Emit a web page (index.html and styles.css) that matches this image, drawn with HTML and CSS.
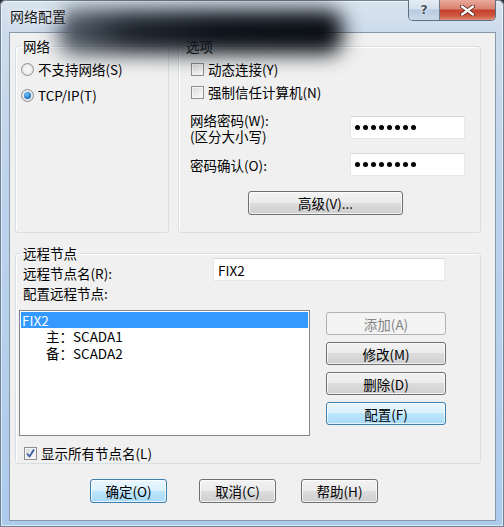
FILE: index.html
```html
<!DOCTYPE html>
<html lang="zh-CN">
<head>
<meta charset="utf-8">
<title>网络配置</title>
<link rel="stylesheet" href="styles.css">
</head>
<body>
<div class="window">
  <div class="titlebar">
    <div class="smudge"></div>
    <span class="title">网络配置</span>
    <div class="caption-btns">
      <div class="cbtn help">?</div>
      <div class="cbtn close">
        <svg width="17" height="11" viewBox="0 0 17 11"><path d="M3 1.5 L14 9.5 M14 1.5 L3 9.5" stroke="#5a2a22" stroke-width="4" stroke-linecap="round"/><path d="M3 1.5 L14 9.5 M14 1.5 L3 9.5" stroke="#ffffff" stroke-width="2.2" stroke-linecap="round"/></svg>
      </div>
    </div>
  </div>
  <div class="client">
    <div class="top-row">
      <fieldset class="group g-net">
        <legend>网络</legend>
        <div class="net-body">
          <div class="opt"><span class="radio"></span><span>不支持网络(S)</span></div>
          <div class="opt"><span class="radio on"></span><span>TCP/IP(T)</span></div>
        </div>
      </fieldset>
      <fieldset class="group g-opt">
        <legend>选项</legend>
        <div class="opt-body">
          <div class="opt"><span class="check"></span><span>动态连接(Y)</span></div>
          <div class="opt opt2"><span class="check"></span><span>强制信任计算机(N)</span></div>
          <div class="pw-row pw-row1">
            <div class="pw-label"><div class="ln">网络密码(W):</div><div class="ln">(区分大小写)</div></div>
            <div class="pw"><i></i><i></i><i></i><i></i><i></i><i></i><i></i><i></i></div>
          </div>
          <div class="pw-row pw-row2">
            <div class="pw-label">密码确认(O):</div>
            <div class="pw"><i></i><i></i><i></i><i></i><i></i><i></i><i></i><i></i></div>
          </div>
          <div class="btn btn-adv">高级(V)...</div>
        </div>
      </fieldset>
    </div>
    <fieldset class="group g-remote">
      <legend>远程节点</legend>
      <div class="remote-body">
        <div class="name-row">
          <span class="lbl">远程节点名(R):</span>
          <div class="textbox">FIX2</div>
        </div>
        <div class="lbl cfg-lbl">配置远程节点:</div>
        <div class="list-row">
          <div class="listbox">
            <div class="item sel">FIX2</div>
            <div class="item sub">主：SCADA1</div>
            <div class="item sub">备：SCADA2</div>
          </div>
          <div class="side-btns">
            <div class="btn disabled">添加(A)</div>
            <div class="btn">修改(M)</div>
            <div class="btn">删除(D)</div>
            <div class="btn default">配置(F)</div>
          </div>
        </div>
        <div class="opt show-all"><span class="check on"><svg width="11" height="11" viewBox="0 0 11 11"><path d="M2 5.5 L4.5 8.5 L9 1.5" fill="none" stroke="#3c5ea6" stroke-width="1.8" stroke-linejoin="round"/></svg></span><span>显示所有节点名(L)</span></div>
      </div>
    </fieldset>
    <div class="footer">
      <div class="btn default b-ok">确定(O)</div>
      <div class="btn b-cancel">取消(C)</div>
      <div class="btn b-help">帮助(H)</div>
    </div>
  </div>
</div>
</body>
</html>
```

FILE: styles.css
```css
* { box-sizing: border-box; }
html, body { margin: 0; padding: 0; background: #2b3038; }
body {
  font-family: "Noto Sans CJK SC", "Noto Sans", sans-serif;
  font-size: 13.5px;
  line-height: 16px;
  color: #000;
}
.window {
  width: 504px;
  height: 527px;
  border-radius: 6px 6px 0 0;
  background: linear-gradient(to bottom, #dae4ef 0px, #cddbeb 32px, #bcd3ec 200px, #aecbec 527px);
  box-shadow: inset 0 0 0 1px #6f8296, inset 0 0 0 2px rgba(255,255,255,0.55);
  display: flex;
  flex-direction: column;
  overflow: hidden;
}
.titlebar {
  position: relative;
  height: 32px;
  display: flex;
  align-items: flex-start;
  padding: 0 8px 0 10px;
}
.smudge {
  position: absolute;
  left: 58px;
  top: 10px;
  width: 285px;
  height: 44px;
  background: linear-gradient(to right, #5a6470 0%, #1e252e 25%, #0c1219 55%, #090d12 100%);
  filter: blur(10px);
  border-radius: 16px;
}
.title {
  position: relative;
  margin-top: 8px;
  font-size: 14px;
  line-height: 17px;
  color: #1a1a1a;
  text-shadow: 0 0 6px rgba(255,255,255,0.8);
}
.caption-btns {
  position: relative;
  margin-left: auto;
  display: flex;
  height: 21px;
  border: 1px solid #5f6f82;
  border-top: none;
  border-radius: 0 0 5px 5px;
  overflow: hidden;
}
.cbtn {
  height: 20px;
  display: flex;
  align-items: center;
  justify-content: center;
}
.help {
  width: 31px;
  border-right: 1px solid #6d7b8c;
  background: linear-gradient(to bottom, #e4ecf5 0%, #d3dfec 45%, #b9cbe0 50%, #c9d9ea 100%);
  font-family: "DejaVu Sans", sans-serif;
  font-weight: bold;
  font-size: 13px;
  color: #4a5462;
  text-shadow: 0 0 2px #fff, 0 0 2px #fff;
}
.close {
  width: 55px;
  background: linear-gradient(to bottom, #e9a99b 0%, #d8826f 45%, #c4402e 50%, #d0583f 80%, #e0907a 100%);
}
.client {
  margin: 0 8px 0 9px;
  height: 489px;
  border: 1px solid #8a97a6;
  background: #f0f0f0;
  padding: 5px 0 0 5px;
}
.top-row {
  display: flex;
  gap: 9px;
}
.group {
  margin: 0;
  padding: 0;
  border: 1px solid #d5dfe5;
  border-radius: 3px;
  box-shadow: inset 1px 1px 0 #fff;
  min-width: 0;
}
.group legend {
  margin-left: 5px;
  padding: 0 2px;
  line-height: 16px;
}
.g-net { width: 154px; height: 195px; }
.g-opt { width: 303px; height: 195px; }
.g-remote { width: 466px; height: 219px; margin-top: 12px; }

.opt {
  display: flex;
  align-items: center;
  gap: 4px;
  height: 18px;
}
.net-body {
  padding: 6px 0 0 5px;
  display: flex;
  flex-direction: column;
  gap: 8px;
}
.radio {
  width: 13px;
  height: 13px;
  border-radius: 50%;
  border: 1px solid #8d9196;
  background: radial-gradient(circle at 50% 50%, #f4f4f4 0 3px, #dcdcdc 6px);
  display: flex;
  align-items: center;
  justify-content: center;
}
.radio.on::after {
  content: "";
  width: 7px;
  height: 7px;
  border-radius: 50%;
  background: radial-gradient(circle at 40% 35%, #7cc4f8 0, #2a7fd0 55%, #0f4f92 100%);
}
.check {
  width: 13px;
  height: 13px;
  border: 1px solid #8e8f8f;
  background: linear-gradient(135deg, #d9d9d9 0%, #eeeeee 60%, #fafafa 100%);
  box-shadow: inset 0 0 0 1px #f4f4f4;
  display: flex;
  align-items: center;
  justify-content: center;
}
.opt-body {
  padding: 6px 15px 0 12px;
  display: flex;
  flex-direction: column;
}
.opt2 { margin-top: 5px; }
.pw-row {
  display: flex;
  justify-content: space-between;
  margin-left: -1px;
}
.pw-row1 { margin-top: 11px; align-items: flex-start; }
.pw-row1 .pw { margin-top: 4px; }
.pw-row2 { margin-top: 9px; align-items: center; }
.ln { height: 16px; }
.pw {
  width: 115px;
  height: 23px;
  background: #fff;
  border: 1px solid #e2e8ee;
  border-top-color: #d3dae1;
  display: flex;
  align-items: center;
  gap: 3px;
  padding-left: 4px;
}
.pw i {
  width: 5px;
  height: 5px;
  border-radius: 50%;
  background: #000;
}
.btn {
  height: 24px;
  border: 1px solid #707070;
  border-radius: 3px;
  background: linear-gradient(to bottom, #f2f2f2 0%, #ebebeb 49%, #dddddd 50%, #cfcfcf 100%);
  box-shadow: inset 0 0 0 1px rgba(255,255,255,0.7);
  display: flex;
  align-items: center;
  justify-content: center;
  line-height: 16px;
}
.btn-adv {
  margin-top: 15px;
  margin-left: 57px;
  width: 155px;
}
.btn.default {
  border-color: #3c7fb1;
  background: linear-gradient(to bottom, #eaf6fd 0%, #d9f0fc 49%, #bee6fd 50%, #a7d9f5 100%);
}
.btn.disabled {
  border-color: #adb2b5;
  background: #f4f4f4;
  color: #838383;
  box-shadow: none;
}
.remote-body {
  padding: 0 0 0 3px;
  display: flex;
  flex-direction: column;
}
.name-row {
  margin-top: -3px;
  display: flex;
  align-items: flex-end;
}
.lbl { margin-left: 4px; }
.textbox {
  margin-left: auto;
  margin-right: 35px;
  width: 232px;
  height: 23px;
  background: #fff;
  border: 1px solid #e2e8ee;
  border-top-color: #d3dae1;
  padding: 3px 0 0 4px;
}
.cfg-lbl { margin-top: 4px; }
.list-row {
  margin-top: 9px;
  display: flex;
  gap: 16px;
}
.listbox {
  width: 291px;
  height: 126px;
  background: #fff;
  border: 1px solid #828790;
  padding: 1px 1px 0 1px;
}
.item {
  height: 16px;
  line-height: 16px;
  padding-left: 1px;
}
.item.sub { height: 17px; line-height: 17px; }
.item.sel {
  background: #3399ff;
  color: #fff;
}
.item.sub { padding-left: 25px; }
.side-btns {
  width: 120px;
  padding-top: 2px;
  display: flex;
  flex-direction: column;
  gap: 7px;
}
.side-btns .btn { height: 23px; }
.show-all {
  margin-top: 8px;
  margin-left: 5px;
}
.footer {
  margin-top: 15px;
  padding-left: 75px;
  display: flex;
}
.footer .btn { width: 77px; }
.b-cancel { margin-left: 32px; }
.b-help { margin-left: 25px; }
```
